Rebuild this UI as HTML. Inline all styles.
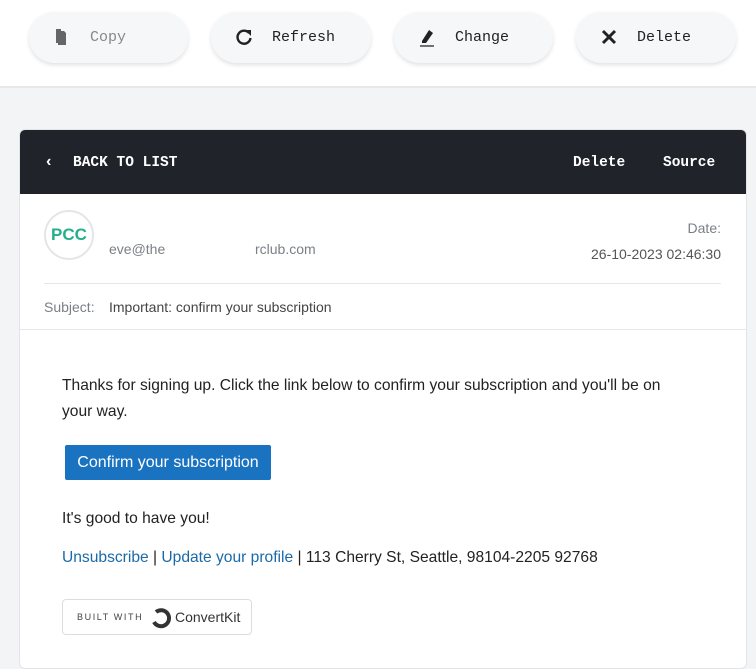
<!DOCTYPE html>
<html><head><style>
*{box-sizing:border-box;margin:0;padding:0}
body{width:756px;height:651px;overflow:hidden;background:#f3f4f6;font-family:"Liberation Sans",sans-serif;position:relative}
.top{position:absolute;left:0;top:0;width:756px;height:88px;background:#fff;border-bottom:2px solid #e5e7eb}
.btn{position:absolute;top:12px;height:51px;border-radius:26px;background:#f6f7f8;box-shadow:0 2px 4px rgba(0,0,0,.12);font-family:"Liberation Mono",monospace;font-size:15px;color:#222;display:flex;align-items:center}
.btn svg{position:absolute;left:24px;top:16px}
.btn span{position:absolute;left:61px;top:17px}
.card{position:absolute;left:19px;top:129px;width:728px;height:540px;background:#fff;border:1px solid #e2e4e8;border-radius:6px;overflow:hidden}
.hd{height:64px;background:#202329;color:#fff;font-family:"Liberation Mono",monospace;font-weight:bold;font-size:14.5px;position:relative}
.hd div{position:absolute;top:25px}
.av{position:absolute;left:24px;top:80px;width:50px;height:50px;border-radius:50%;border:2px solid #e3e5e8;color:#22b08a;font-weight:bold;font-size:17px;text-align:center;line-height:46px}
.g{color:#7b7f86;font-size:14px;position:absolute}
.body{position:absolute;left:42px;font-size:15.6px;color:#222;font-family:"Liberation Sans",sans-serif}
a{color:#1a6aa8;text-decoration:none}
</style></head><body>
<div class="top">
<div class="btn" style="left:29px;width:159px;color:#888"><svg width="16" height="18" viewBox="0 0 16 18"><path d="M5 3h6l2 2v12H5z" fill="#666"/><path d="M3 1h5v2H5v12H3z" fill="#666"/></svg><span>Copy</span></div>
<div class="btn" style="left:211px;width:160px"><svg width="18" height="18" viewBox="0 0 18 18"><path d="M14 5A6.5 6.5 0 1 0 15.5 10" fill="none" stroke="#222" stroke-width="2.4"/><path d="M10 2h6v6z" fill="#222"/></svg><span>Refresh</span></div>
<div class="btn" style="left:394px;width:159px"><svg width="20" height="20" viewBox="0 0 20 20"><path d="M4 13l7-11 4 3-7 10H4z" fill="#222"/><path d="M2 18h14" stroke="#444" stroke-width="1.5"/></svg><span>Change</span></div>
<div class="btn" style="left:576px;width:160px"><svg width="18" height="18" viewBox="0 0 18 18"><path d="M3 3l12 12M15 3L3 15" stroke="#222" stroke-width="3"/></svg><span>Delete</span></div>
</div>
<div class="card">
<div class="hd"><div style="left:24px;top:23px;font-size:16px">‹</div><div style="left:53px">BACK TO LIST</div><div style="left:553px">Delete</div><div style="left:643px">Source</div></div>
<div class="av">PCC</div>
<div class="g" style="left:89px;top:111px">eve@the</div>
<div class="g" style="left:235px;top:111px">rclub.com</div>
<div class="g" style="right:25px;top:90px">Date:</div>
<div class="g" style="right:25px;top:116px;color:#555">26-10-2023 02:46:30</div>
<div style="position:absolute;left:24px;right:25px;top:153px;border-top:1px solid #e5e7eb"></div>
<div class="g" style="left:24px;top:169px">Subject:</div>
<div class="g" style="left:89px;top:169px;color:#444">Important: confirm your subscription</div>
<div style="position:absolute;left:0;right:0;top:199px;border-top:1px solid #e5e7eb"></div>
<div class="body" style="top:243px;width:625px;line-height:26px">Thanks for signing up. Click the link below to confirm your subscription and you'll be on your way.</div>
<div style="position:absolute;left:45px;top:315px;width:206px;height:35px;background:#1a73c1;color:#fff;font-size:16px;text-align:center;line-height:35px;border-radius:2px">Confirm your subscription</div>
<div class="body" style="top:380px">It's good to have you!</div>
<div class="body" style="top:419px"><a>Unsubscribe</a> | <a>Update your profile</a> | 113 Cherry St, Seattle, 98104-2205 92768</div>
<div style="position:absolute;left:42px;top:469px;width:190px;height:36px;border:1px solid #ddd;border-radius:4px">
<span style="position:absolute;left:14px;top:12px;font-size:9px;letter-spacing:1.6px;color:#444">BUILT WITH</span>
<svg style="position:absolute;left:87px;top:7px" width="22" height="22" viewBox="0 0 22 22"><path d="M6 5A8 8 0 1 1 4 15" fill="none" stroke="#333" stroke-width="4"/></svg>
<span style="position:absolute;left:112px;top:9px;font-size:14px;color:#333">ConvertKit</span></div>
</div>
</body></html>
